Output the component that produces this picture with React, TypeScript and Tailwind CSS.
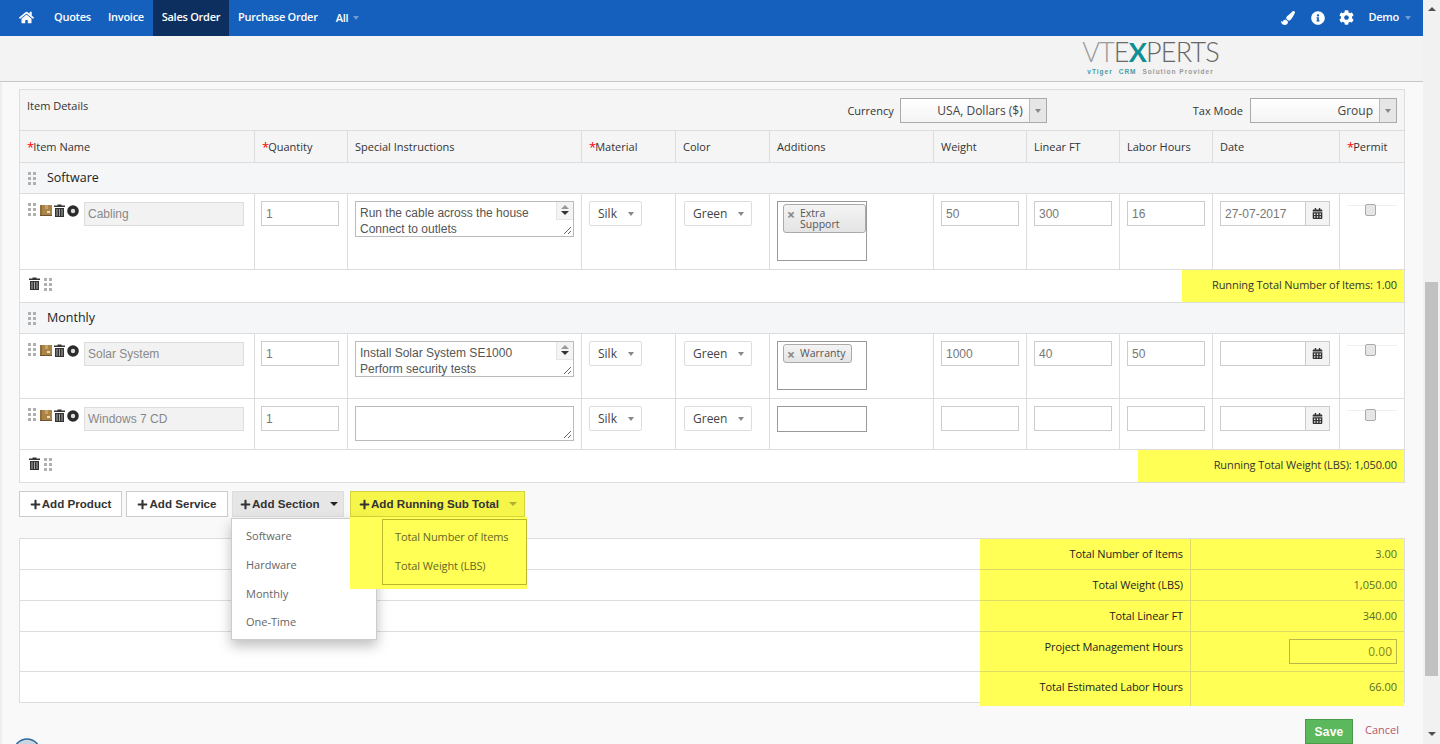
import { ReactNode } from 'react';
import { FaCalendarAlt, FaCog, FaHome, FaInfoCircle, FaPaintBrush, FaPlus } from 'react-icons/fa';

const GRID = 'grid grid-cols-[234px_93px_234px_94px_94px_164px_93px_93px_93px_127px_65px]';

function Dots() {
  return (
    <svg width="8" height="14" viewBox="0 0 8 14" className="shrink-0" fill="#b0b0b0">
      <rect x="0" y="1" width="3" height="3" />
      <rect x="5" y="1" width="3" height="3" />
      <rect x="0" y="6" width="3" height="3" />
      <rect x="5" y="6" width="3" height="3" />
      <rect x="0" y="11" width="3" height="3" />
      <rect x="5" y="11" width="3" height="3" />
    </svg>
  );
}

function Trash() {
  return (
    <svg width="11" height="13" viewBox="0 0 11 13" className="shrink-0">
      <path d="M3.5 1.5V0.5h4v1H11v1.5H0V1.5z" fill="#333" />
      <path d="M1 4h9v9H1z" fill="#333" />
      <path d="M3 5v7M5.5 5v7M8 5v7" stroke="#aaa" strokeWidth="1" />
    </svg>
  );
}

function ProductIcon() {
  return (
    <svg width="12" height="11" viewBox="0 0 12 11" className="shrink-0">
      <rect width="12" height="11" fill="#ab8449" />
      <rect x="0" width="2" height="11" fill="#8f6c3a" />
      <rect x="5" width="3" height="4" fill="#c6a468" />
      <rect x="7" y="6" width="3" height="2" fill="#ecdcb8" />
      <rect y="10" width="12" height="1" fill="#6e5330" />
    </svg>
  );
}

function StopIcon() {
  return (
    <svg width="12" height="12" viewBox="0 0 12 12" className="shrink-0">
      <circle cx="6" cy="6" r="4" fill="#dcdcdc" stroke="#2b2b2b" strokeWidth="3.6" />
    </svg>
  );
}

function Caret({ className }: { className: string }) {
  return <span className={`w-0 h-0 border-x-[3px] border-x-transparent border-t-[4px] ${className}`} />;
}

function Req() {
  return <span className="text-[#f00] text-[13px] leading-none -mr-[1px]">*</span>;
}

function HeadCell({ label, req, first }: { label: string; req?: boolean; first?: boolean }) {
  return (
    <div className={`flex items-center px-[7px] pt-[1px] text-[11px] text-[#333] ${first ? '' : 'border-l border-[#ddd]'}`}>
      {req && <Req />}
      {label}
    </div>
  );
}

function TextBox({ value, className }: { value?: string; className: string }) {
  return (
    <div className={`h-[25px] border border-[#ccc] bg-white px-[4px] flex items-center font-['Liberation_Sans',sans-serif] text-[12px] text-[#777] ${className}`}>
      {value}
    </div>
  );
}

function NoteBox({ lines, tall }: { lines: string[]; tall?: boolean }) {
  return (
    <div className={`relative w-[219px] border border-[#bbb] bg-white flex font-['Liberation_Sans',sans-serif] text-[12px] leading-[16px] text-[#555] ${tall ? 'h-[35px]' : 'h-[36px]'}`}>
      <div className="flex-1 pl-[4px] pt-[3px] overflow-hidden whitespace-nowrap">
        {lines.map((l) => (
          <div key={l}>{l}</div>
        ))}
      </div>
      {lines.length > 0 && (
        <div className="w-[17px] flex flex-col items-center border-l border-b border-[#e4e4e4] bg-[#f4f4f4] h-[18px] pt-[3px] gap-[2px]">
          <span className="w-0 h-0 border-x-[4px] border-x-transparent border-b-[4px] border-b-[#999]" />
          <span className="w-0 h-0 border-x-[4px] border-x-transparent border-t-[4px] border-t-[#333]" />
        </div>
      )}
      <svg width="9" height="9" viewBox="0 0 9 9" className="absolute right-[1px] bottom-[1px]" stroke="#666" fill="none">
        <path d="M1 8L8 1M5 8L8 5" />
      </svg>
    </div>
  );
}

function PickList({ value, className }: { value: string; className: string }) {
  return (
    <div className={`h-[25px] border border-[#ddd] rounded-[2px] bg-white pl-[8px] pr-[7px] flex items-center justify-between text-[12px] text-[#444] ${className}`}>
      {value}
      <Caret className="border-t-[#888]" />
    </div>
  );
}

function Chip({ children, className }: { children: ReactNode; className: string }) {
  return (
    <div className={`flex gap-[5px] border border-[#aaa] rounded-[3px] pl-[3px] pr-[4px] bg-gradient-to-b from-[#f4f4f4] to-[#e4e4e4] text-[10.5px] leading-[11px] text-[#555] ${className}`}>
      <span className="text-[#888] font-bold text-[14px] leading-[20px]">×</span>
      <span className="pt-[3px]">{children}</span>
    </div>
  );
}

function ItemRow({ name, notes, chip, boxClass, values, date, height }: {
  name: string;
  notes: string[];
  chip?: ReactNode;
  boxClass: string;
  values: string[];
  date?: string;
  height: string;
}) {
  return (
    <div className={`${GRID} bg-white border-b border-[#ddd] ${height}`}>
      <div className="flex items-start pl-[8px] pt-[8px]">
        <Dots />
        <div className="flex items-center gap-[2px] ml-[4px] mt-[2px]">
          <ProductIcon />
          <Trash />
          <StopIcon />
        </div>
        <div className="ml-[5px] w-[160px] h-[24px] border border-[#ddd] bg-[#f2f2f2] px-[3px] flex items-center font-['Liberation_Sans',sans-serif] text-[12px] text-[#888]">
          {name}
        </div>
      </div>
      <div className="border-l border-[#ddd] pl-[6px] pt-[7px]">
        <TextBox value="1" className="w-[78px]" />
      </div>
      <div className="border-l border-[#ddd] pl-[7px] pt-[7px]">
        <NoteBox lines={notes} tall={notes.length === 0} />
      </div>
      <div className="border-l border-[#ddd] pl-[7px] pt-[7px]">
        <PickList value="Silk" className="w-[53px]" />
      </div>
      <div className="border-l border-[#ddd] pl-[8px] pt-[7px]">
        <PickList value="Green" className="w-[68px]" />
      </div>
      <div className="border-l border-[#ddd] pl-[7px] pt-[7px]">
        <div className={`w-[90px] border border-[#999] bg-white pl-[5px] pt-[2px] ${boxClass}`}>{chip}</div>
      </div>
      {values.map((v, i) => (
        <div key={i} className="border-l border-[#ddd] pl-[7px] pt-[7px]">
          <TextBox value={v} className="w-[78px]" />
        </div>
      ))}
      <div className="border-l border-[#ddd] pl-[7px] pt-[7px]">
        <div className="flex w-[110px] h-[25px] border border-[#ccc]">
          <div className="flex-1 bg-white px-[4px] flex items-center font-['Liberation_Sans',sans-serif] text-[12px] text-[#777]">{date}</div>
          <div className="w-[24px] border-l border-[#ccc] bg-[#f3f3f3] flex items-center justify-center text-[#333]">
            <FaCalendarAlt size={11} />
          </div>
        </div>
      </div>
      <div className="border-l border-[#ddd] pl-[7px] pt-[11px]">
        <div className="w-[50px] h-[12px] border-t border-[#eee] pl-[18px]">
          <span className="block w-[11px] h-[12px] -mt-[2px] rounded-[2px] border border-[#aaa] bg-[#e6e6e6]" />
        </div>
      </div>
    </div>
  );
}

function RunningRow({ label, yellowClass }: { label: string; yellowClass: string }) {
  return (
    <div className="flex justify-between h-[33px] bg-white border-b border-[#ddd]">
      <div className="flex items-center gap-[4px] pl-[9px] pb-[5px]">
        <Trash />
        <Dots />
      </div>
      <div className={`bg-[#ffff55] flex items-center justify-end pr-[7px] pb-[1px] text-[11px] tracking-[-0.1px] text-[#333] ${yellowClass}`}>{label}</div>
    </div>
  );
}

function SectionRow({ title }: { title: string }) {
  return (
    <div className="h-[31px] bg-[#f5f6f8] border-b border-[#ddd] flex items-center pl-[8px] gap-[11px] text-[12.5px] text-[#222]">
      <Dots />
      {title}
    </div>
  );
}

function SummaryRow({ label, value, height, top, input, last }: {
  label: string;
  value: string;
  height: string;
  top?: boolean;
  input?: boolean;
  last?: boolean;
}) {
  const yellowEnd = last ? 'self-start h-[34px] pt-[7px] items-start' : 'items-center';
  return (
    <div className={`grid grid-cols-[960px_211px_213px] grid-rows-1 ${height}`}>
      <div className="bg-white border-b border-[#ddd] h-full" />
      <div className={`bg-[#ffff55] border-r border-[#dcdc66] pr-[7px] text-right text-[11px] tracking-[-0.1px] text-[#222] flex justify-end ${last ? '' : 'border-b'} ${top ? 'pt-[7px] items-start' : yellowEnd}`}>
        {label}
      </div>
      <div className={`bg-[#ffff55] border-[#dcdc66] pr-[7px] flex justify-end text-[11px] text-[#5c6b2a] ${last ? '' : 'border-b'} ${yellowEnd}`}>
        {input ? (
          <div className="w-[108px] h-[25px] border border-[#b8b84a] flex items-center justify-end pr-[4px] text-[12px] text-[#8a8a1a]">{value}</div>
        ) : (
          value
        )}
      </div>
    </div>
  );
}

function ActionButton({ label, className, caret }: { label: string; className: string; caret?: string }) {
  return (
    <button className={`h-[26px] border flex items-center font-['Liberation_Sans',sans-serif] font-bold text-[11.6px] text-[#333] ${className}`}>
      <FaPlus size={11} className="mr-[1px]" />
      {label}
      {caret && <span className={`w-0 h-0 ml-[10px] border-x-[4px] border-x-transparent border-t-[4px] ${caret}`} />}
    </button>
  );
}

export default function App() {
  return (
    <div className="relative flex w-[1440px] h-[744px] overflow-hidden bg-[#f9f9f9] font-['Open_Sans',sans-serif]">
      <div className="w-[1423px] h-[744px] shrink-0 overflow-hidden">
        {/* Top nav */}
        <nav className="flex items-center h-[36px] bg-[#1560bd] text-white text-[11px] tracking-[-0.25px] font-semibold">
          <div className="flex items-center w-[45px] h-full pl-[19px] pb-[2px]">
            <FaHome size={15} />
          </div>
          <a className="px-[9px] leading-[34px] h-full">Quotes</a>
          <a className="pl-[8px] pr-[9px] leading-[34px] h-full">Invoice</a>
          <a className="w-[76px] text-center leading-[34px] h-full bg-[#0d2f60]">Sales Order</a>
          <a className="px-[9px] leading-[34px] h-full">Purchase Order</a>
          <a className="flex items-center gap-[5px] ml-[9px] leading-[34px] h-full pb-[1px]">
            All
            <Caret className="border-t-[#6f9ad6]" />
          </a>
          <div className="ml-auto flex items-center pr-[12px] pb-[1px]">
            <FaPaintBrush size={14} />
            <FaInfoCircle size={14} className="ml-[16px]" />
            <FaCog size={15} className="ml-[14px]" />
            <span className="ml-[14px]">Demo</span>
            <Caret className="ml-[6px] border-t-[#6f9ad6]" />
          </div>
        </nav>

        {/* Sub header with the logo */}
        <div className="flex justify-end h-[46px] bg-[#f3f3f3] border-b border-[#c8c8c8] pr-[204px]">
          <div className="w-[137px] pt-[4px]">
            <div className="flex justify-center font-['Lato',sans-serif] font-light text-[27px] leading-[24px] tracking-[-0.8px]">
              <span className="text-[#9a9a9a]">VT</span>
              <span className="text-[#6a6a6a]">E</span>
              <span className="text-[#0e8f96] font-bold">X</span>
              <span className="text-[#666]">PERTS</span>
            </div>
            <div className="flex justify-center gap-[6px] mt-[5px] font-['Liberation_Sans',sans-serif] font-bold text-[6.5px] leading-[6px] tracking-[1px] whitespace-nowrap">
              <span className="text-[#4a9aa5]">vTiger</span>
              <span className="text-[#4a9aa5]">CRM</span>
              <span className="text-[#9a9a9a]">Solution Provider</span>
            </div>
          </div>
        </div>

        <div className="h-[662px] border-l-2 border-[#eee] pl-[17px] pt-[7px]">
          {/* Items table */}
          <div className="w-[1386px] border-x border-t border-[#ddd]">
            <div className="relative flex h-[41px] bg-[#f5f5f5] border-b border-[#ddd] text-[11px] text-[#333]">
              <div className="pl-[7px] pt-[8px]">Item Details</div>
              <div className="ml-auto flex items-start pt-[8px] pr-[7px]">
                <span className="mt-[5px] mr-[6px]">Currency</span>
                <div className="flex w-[147px] h-[25px] border border-[#aaa] bg-gradient-to-b from-white to-[#f4f4f4]">
                  <span className="flex-1 flex items-center justify-end pr-[6px] text-[12px] text-[#444]">USA, Dollars ($)</span>
                  <span className="w-[17px] border-l border-[#bbb] bg-[#e6e6e6] flex items-center justify-center">
                    <Caret className="border-t-[#888]" />
                  </span>
                </div>
                <span className="mt-[5px] ml-[146px] mr-[7px]">Tax Mode</span>
                <div className="flex w-[147px] h-[25px] border border-[#aaa] bg-gradient-to-b from-white to-[#f4f4f4]">
                  <span className="flex-1 flex items-center justify-end pr-[6px] text-[12px] text-[#444]">Group</span>
                  <span className="w-[17px] border-l border-[#bbb] bg-[#e6e6e6] flex items-center justify-center">
                    <Caret className="border-t-[#888]" />
                  </span>
                </div>
              </div>
            </div>

            <div className={`${GRID} h-[32px] bg-[#f5f5f5] border-b border-[#ddd]`}>
              <HeadCell label="Item Name" req first />
              <HeadCell label="Quantity" req />
              <HeadCell label="Special Instructions" />
              <HeadCell label="Material" req />
              <HeadCell label="Color" />
              <HeadCell label="Additions" />
              <HeadCell label="Weight" />
              <HeadCell label="Linear FT" />
              <HeadCell label="Labor Hours" />
              <HeadCell label="Date" />
              <HeadCell label="Permit" req />
            </div>

            <SectionRow title="Software" />
            <ItemRow
              name="Cabling"
              height="h-[76px]"
              notes={['Run the cable across the house', 'Connect to outlets']}
              boxClass="h-[60px]"
              chip={<Chip className="w-[83px] h-[29px]">Extra Support</Chip>}
              values={['50', '300', '16']}
              date="27-07-2017"
            />
            <RunningRow label="Running Total Number of Items: 1.00" yellowClass="w-[222px]" />

            <SectionRow title="Monthly" />
            <ItemRow
              name="Solar System"
              height="h-[65px]"
              notes={['Install Solar System SE1000', 'Perform security tests']}
              boxClass="h-[49px]"
              chip={<Chip className="w-[69px] h-[19px]">Warranty</Chip>}
              values={['1000', '40', '50']}
            />
            <ItemRow
              name="Windows 7 CD"
              height="h-[51px]"
              notes={[]}
              boxClass="h-[26px]"
              values={['', '', '']}
            />
            <RunningRow label="Running Total Weight (LBS): 1,050.00" yellowClass="w-[266px]" />
          </div>

          {/* Add buttons and their open menus */}
          <div className="relative flex mt-[8px]">
            <ActionButton label="Add Product" className="w-[103px] justify-center bg-white border-[#ccc]" />
            <ActionButton label="Add Service" className="w-[102px] ml-[4px] justify-center bg-white border-[#ccc]" />
            <ActionButton label="Add Section" className="w-[112px] ml-[4px] pl-[7px] bg-[#e6e6e6] border-[#ddd]" caret="border-t-[#222]" />
            <ActionButton label="Add Running Sub Total" className="w-[175px] ml-[6px] pl-[8px] bg-[#f5f54a] border-[#d4d43a]" caret="border-t-[#b0b030]" />

            <div className="absolute left-[212px] top-[27px] z-10 w-[146px] h-[122px] bg-white border border-[#ccc] shadow-[0_6px_12px_rgba(0,0,0,0.25)] pl-[14px] text-[11px] text-[#666]">
              <div className="mt-[9px] leading-[16px]">Software</div>
              <div className="mt-[13px] leading-[16px]">Hardware</div>
              <div className="mt-[13px] leading-[16px]">Monthly</div>
              <div className="mt-[12px] leading-[16px]">One-Time</div>
            </div>
            <div className="absolute left-[331px] top-[26px] z-20 w-[177px] h-[72px] bg-[#ffff55]" />
            <div className="absolute left-[363px] top-[28px] z-30 w-[145px] h-[66px] bg-[#ffff55] border border-[#b8b82a] pl-[12px] text-[11px] tracking-[-0.1px] text-[#66662a]">
              <div className="mt-[9px] leading-[16px]">Total Number of Items</div>
              <div className="mt-[13px] leading-[16px]">Total Weight (LBS)</div>
            </div>
          </div>

          {/* Summary table */}
          <div className="w-[1386px] mt-[21px] border-x border-t border-[#ddd]">
            <SummaryRow label="Total Number of Items" value="3.00" height="h-[31px]" />
            <SummaryRow label="Total Weight (LBS)" value="1,050.00" height="h-[31px]" />
            <SummaryRow label="Total Linear FT" value="340.00" height="h-[31px]" />
            <SummaryRow label="Project Management Hours" value="0.00" height="h-[40px]" top input />
            <SummaryRow label="Total Estimated Labor Hours" value="66.00" height="h-[31px]" last />
          </div>

          <div className="flex justify-end items-center w-[1380px] mt-[16px]">
            <button className="w-[48px] h-[25px] bg-[#5cb85c] border border-[#4a9a4a] font-['Liberation_Sans',sans-serif] font-bold text-[12px] tracking-[0.2px] text-white">
              Save
            </button>
            <a className="ml-[12px] pb-[2px] text-[11px] text-[#b5566e]">Cancel</a>
          </div>
        </div>
      </div>

      {/* Page scrollbar */}
      <div className="relative w-[17px] h-[744px] bg-[#f1f1f1] flex flex-col items-center pt-[7px]">
        <span className="w-0 h-0 border-x-[4px] border-x-transparent border-b-[4px] border-b-[#505050]" />
        <div className="w-[13px] h-[394px] bg-[#c1c1c1] mt-[271px]" />
        <span className="w-0 h-0 mt-[56px] border-x-[4px] border-x-transparent border-t-[4px] border-t-[#505050]" />
      </div>

      {/* Round badge cut off by the page bottom */}
      <svg width="28" height="6" viewBox="0 0 28 6" className="absolute left-[13px] bottom-0">
        <circle cx="14" cy="14" r="13" fill="#c8d6e2" stroke="#2f6a9e" strokeWidth="1.5" />
      </svg>
    </div>
  );
}
